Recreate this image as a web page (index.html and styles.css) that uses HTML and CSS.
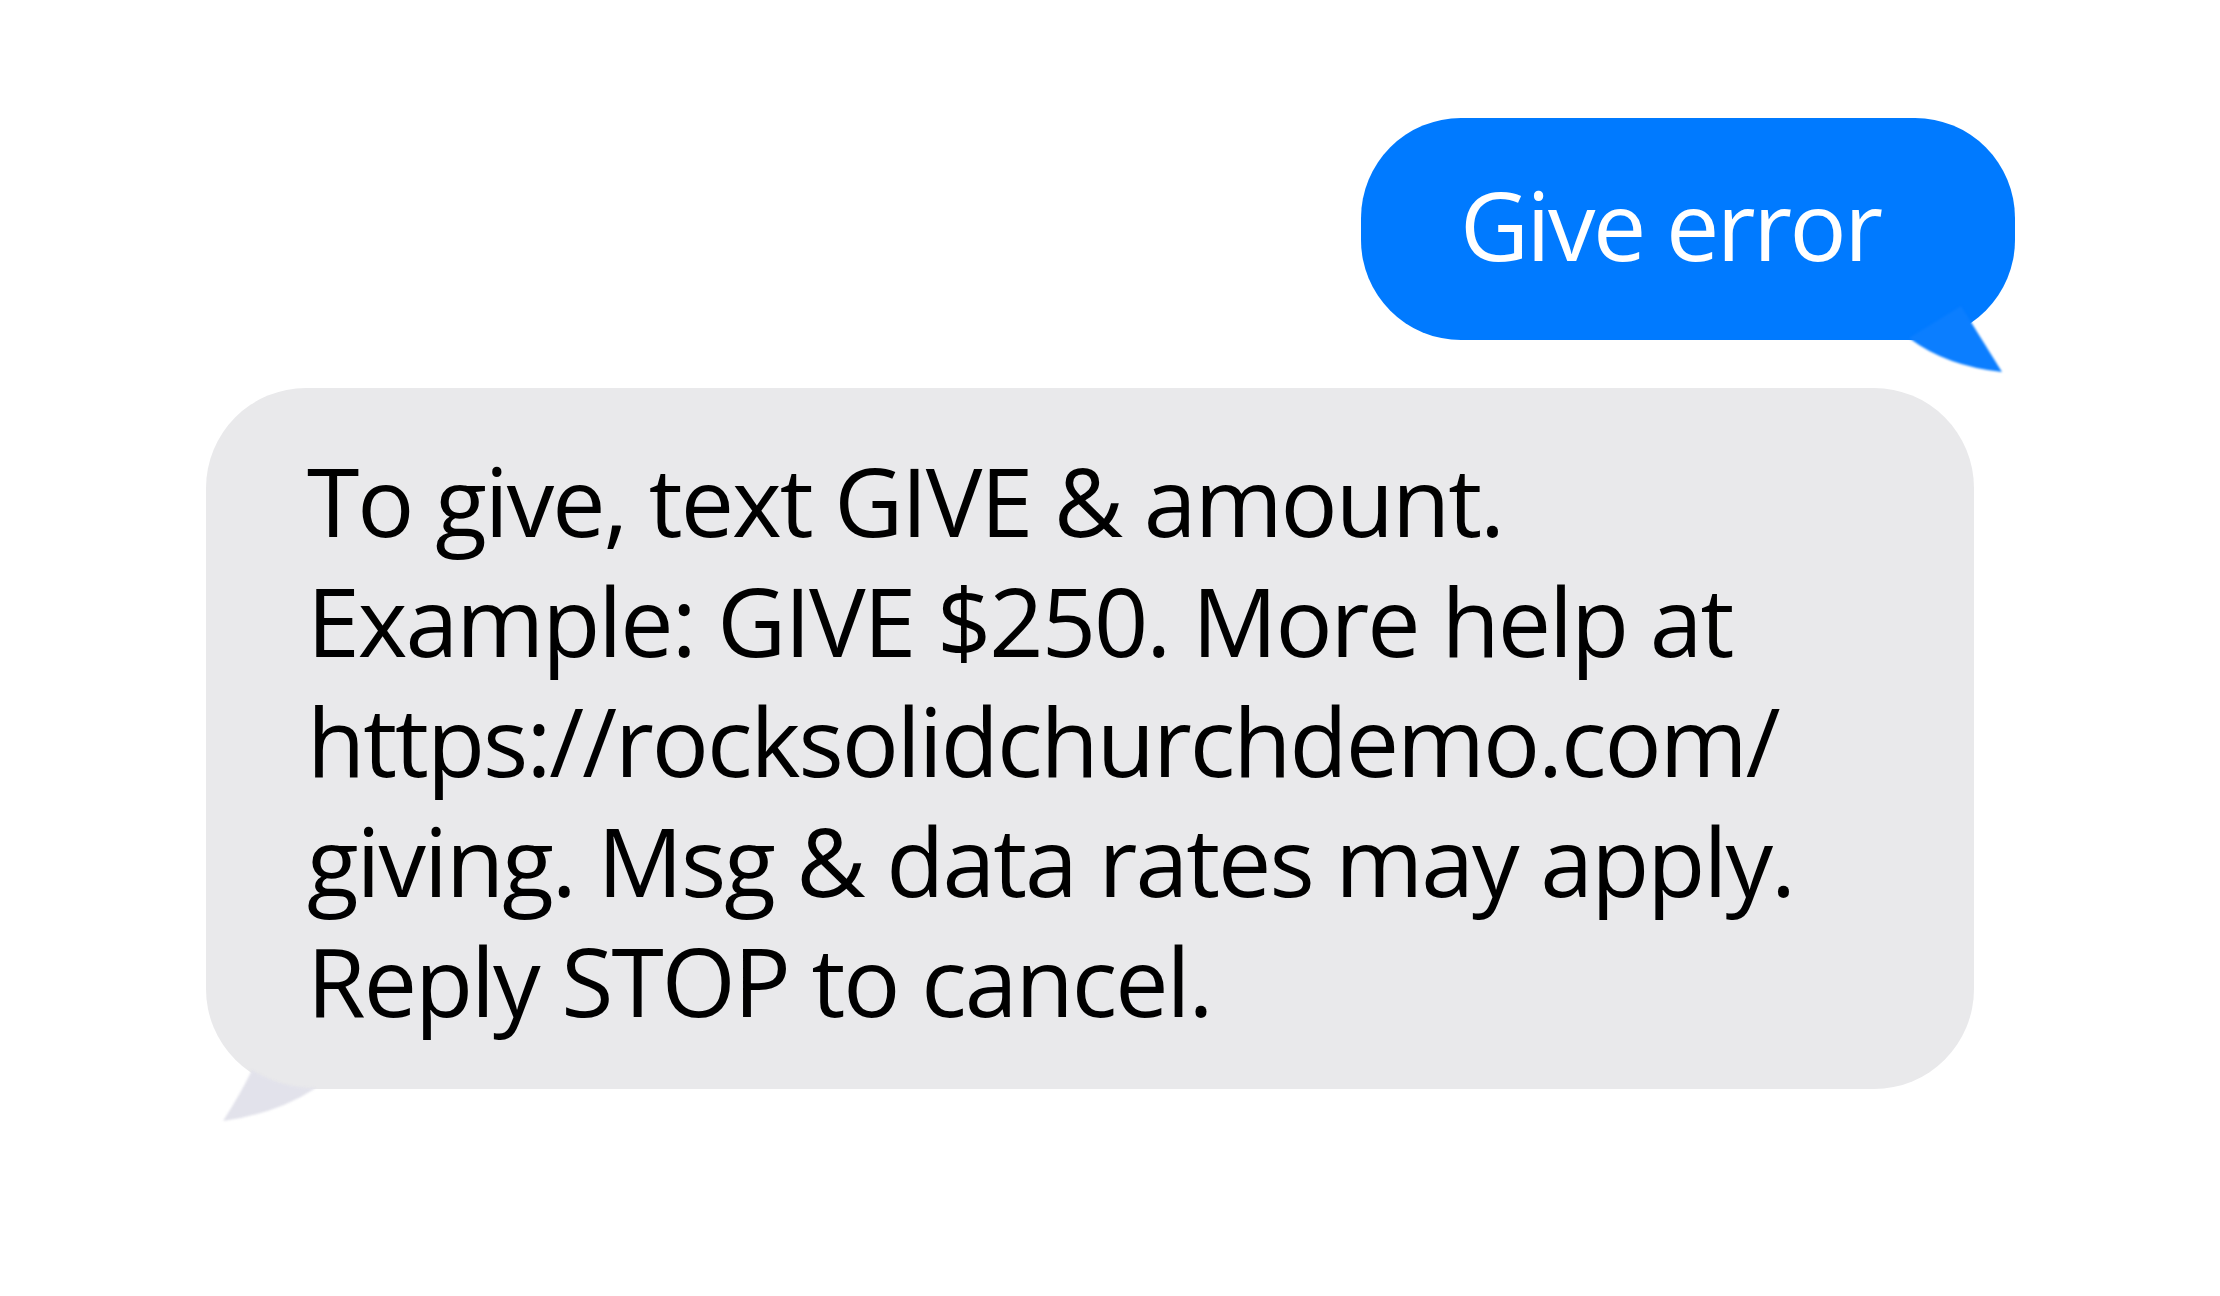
FILE: index.html
```html
<!DOCTYPE html>
<html lang="en">
<head>
    <meta charset="utf-8">
    <title>Give error</title>
    <link rel="stylesheet" href="styles.css">
</head>
<body>
    <div class="thread">
        <div class="msg sent">
            <p>Give error</p>
            <svg class="tail" viewBox="0 0 110 80" aria-hidden="true"><path d="M60 8 L101 74 Q45 68 8 40 Z"/></svg>
        </div>
        <div class="msg recv">
            <p>To give, text GIVE &amp; amount.<br>Example: GIVE $250. More help at<br>https://rocksolidchurchdemo.com/<br>giving. Msg &amp; data rates may apply.<br>Reply STOP to cancel.</p>
            <svg class="tail" viewBox="0 0 120 80" aria-hidden="true"><path d="M46 22 Q35 45 17 73 Q70 66 110 40 Q75 40 46 22 Z"/></svg>
        </div>
    </div>
</body>
</html>
```

FILE: styles.css
```css
body { margin: 0; background: #fff; font-family: "Open Sans", "Noto Sans", sans-serif; }
.thread { display: flex; flex-direction: column; align-items: flex-start; gap: 48px; padding: 118px 205px 120px 206px; }
.msg { position: relative; border-radius: 100px; }
.msg p { margin: 0; font-size: 95px; line-height: 120px; white-space: nowrap; }
.msg .tail { position: absolute; overflow: visible; filter: blur(1.2px); }

.sent { align-self: flex-end; width: 654px; height: 222px; box-sizing: border-box; padding: 46px 0 0 99px; background: #007aff; color: #fff; }
.sent p { letter-spacing: -2.5px; }
.sent .tail { left: 540px; top: 180px; width: 110px; height: 80px; fill: #0b7eff; }

.recv { width: 1768px; height: 701px; box-sizing: border-box; padding: 52px 0 0 101px; background: #e9e9eb; color: #000; }
.recv p { letter-spacing: -2px; }
.recv .tail { left: 0; bottom: -39px; width: 120px; height: 80px; fill: #e2e2eb; }
```
